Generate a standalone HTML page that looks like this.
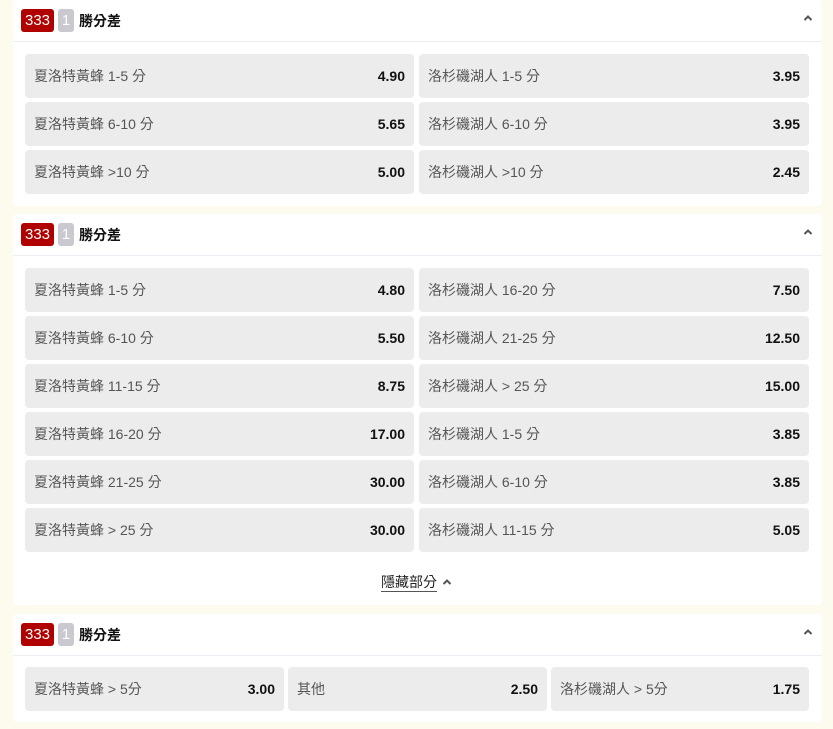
<!DOCTYPE html>
<html><head><meta charset="utf-8"><style>
*{box-sizing:border-box;margin:0;padding:0}
body{width:833px;height:729px;background:#fdfaee;font-family:"Liberation Sans","Noto Sans CJK TC",sans-serif;position:relative;overflow:hidden}
.card{position:absolute;left:13px;width:809px;background:#fff;border-radius:4px}
.hd{height:42px;border-bottom:1px solid #eceef3;position:relative}
.b1{position:absolute;left:8px;top:9px;width:33px;height:23px;background:#b00000;color:#fff;border-radius:3px;font-size:15px;line-height:23px;text-align:center}
.b2{position:absolute;left:45px;top:9px;width:16px;height:23px;background:#c9c9cf;color:#fff;border-radius:3px;font-size:15px;line-height:23px;text-align:center}
.tt{position:absolute;left:66px;top:10px;font-size:14px;font-weight:bold;line-height:22px;color:#111}
.chev{position:absolute;right:9px;top:14px}
.btn{position:absolute;height:44px;background:#ececec;border-radius:4px;font-size:14px;line-height:44px;color:#555;padding:0 9px}
.btn b{position:absolute;right:9px;top:0;color:#111;font-size:14px}
</style></head><body>
<svg width="0" height="0" style="position:absolute"><defs><symbol id="c" viewBox="0 0 10 8"><path d="M1.5 6 L5 2.5 L8.5 6" fill="none" stroke="#555" stroke-width="2"/></symbol></defs></svg>

<div class="card" style="top:0;height:206px">
<div class="hd"><div class="b1">333</div><div class="b2">1</div><div class="tt">勝分差</div><svg class="chev" width="10" height="8"><use href="#c"/></svg></div>
<div class="btn" style="left:12px;top:54px;width:389px">夏洛特黃蜂 1-5 分<b>4.90</b></div>
<div class="btn" style="left:406px;top:54px;width:390px">洛杉磯湖人 1-5 分<b>3.95</b></div>
<div class="btn" style="left:12px;top:102px;width:389px">夏洛特黃蜂 6-10 分<b>5.65</b></div>
<div class="btn" style="left:406px;top:102px;width:390px">洛杉磯湖人 6-10 分<b>3.95</b></div>
<div class="btn" style="left:12px;top:150px;width:389px">夏洛特黃蜂 &gt;10 分<b>5.00</b></div>
<div class="btn" style="left:406px;top:150px;width:390px">洛杉磯湖人 &gt;10 分<b>2.45</b></div>
</div>

<div class="card" style="top:214px;height:391px">
<div class="hd"><div class="b1">333</div><div class="b2">1</div><div class="tt">勝分差</div><svg class="chev" width="10" height="8"><use href="#c"/></svg></div>
<div class="btn" style="left:12px;top:54px;width:389px">夏洛特黃蜂 1-5 分<b>4.80</b></div>
<div class="btn" style="left:406px;top:54px;width:390px">洛杉磯湖人 16-20 分<b>7.50</b></div>
<div class="btn" style="left:12px;top:102px;width:389px">夏洛特黃蜂 6-10 分<b>5.50</b></div>
<div class="btn" style="left:406px;top:102px;width:390px">洛杉磯湖人 21-25 分<b>12.50</b></div>
<div class="btn" style="left:12px;top:150px;width:389px">夏洛特黃蜂 11-15 分<b>8.75</b></div>
<div class="btn" style="left:406px;top:150px;width:390px">洛杉磯湖人 &gt; 25 分<b>15.00</b></div>
<div class="btn" style="left:12px;top:198px;width:389px">夏洛特黃蜂 16-20 分<b>17.00</b></div>
<div class="btn" style="left:406px;top:198px;width:390px">洛杉磯湖人 1-5 分<b>3.85</b></div>
<div class="btn" style="left:12px;top:246px;width:389px">夏洛特黃蜂 21-25 分<b>30.00</b></div>
<div class="btn" style="left:406px;top:246px;width:390px">洛杉磯湖人 6-10 分<b>3.85</b></div>
<div class="btn" style="left:12px;top:294px;width:389px">夏洛特黃蜂 &gt; 25 分<b>30.00</b></div>
<div class="btn" style="left:406px;top:294px;width:390px">洛杉磯湖人 11-15 分<b>5.05</b></div>
<div style="position:absolute;left:368px;top:359px;font-size:14px;line-height:18px;color:#222;border-bottom:1px solid #555">隱藏部分</div>
<svg style="position:absolute;left:429px;top:364px" width="10" height="8"><use href="#c"/></svg>
</div>

<div class="card" style="top:614px;height:108px">
<div class="hd"><div class="b1">333</div><div class="b2">1</div><div class="tt">勝分差</div><svg class="chev" width="10" height="8"><use href="#c"/></svg></div>
<div class="btn" style="left:12px;top:53px;width:259px">夏洛特黃蜂 &gt; 5分<b>3.00</b></div>
<div class="btn" style="left:275px;top:53px;width:259px">其他<b>2.50</b></div>
<div class="btn" style="left:538px;top:53px;width:258px">洛杉磯湖人 &gt; 5分<b>1.75</b></div>
</div>
</body></html>
